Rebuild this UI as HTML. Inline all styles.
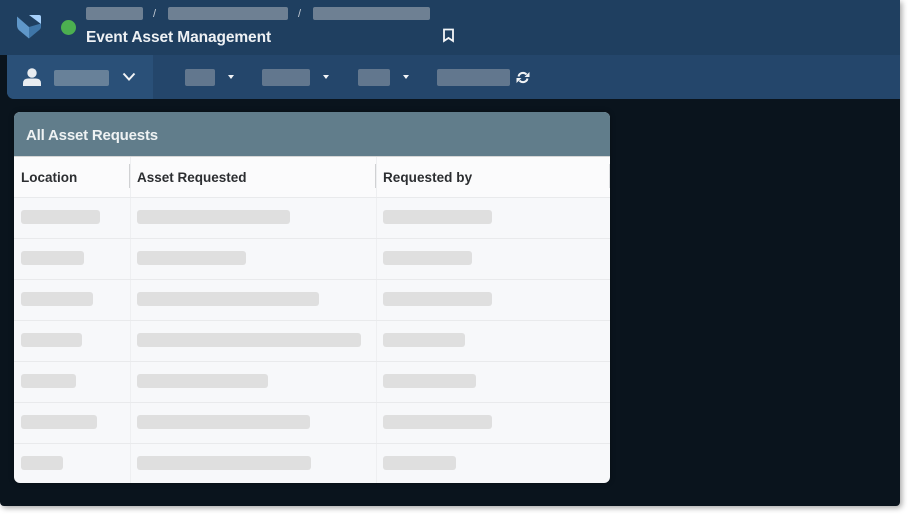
<!DOCTYPE html>
<html><head><meta charset="utf-8">
<style>
*{box-sizing:border-box;margin:0;padding:0}
html,body{width:908px;height:514px;background:#fff;overflow:hidden;font-family:"Liberation Sans",sans-serif}
.a{position:absolute}
#win{position:absolute;left:0;top:0;width:900px;height:506px;background:#0a141d;border-radius:0 0 4px 4px;box-shadow:2px 2px 6px rgba(0,0,0,.35);overflow:hidden}
.bc{position:absolute;top:7px;height:13px;background:#6e8093;border-radius:2px}
.nv{position:absolute;top:69px;height:17px;background:#62778e;border-radius:2px}
.car{position:absolute;top:75px;width:0;height:0;border-left:3.5px solid transparent;border-right:3.5px solid transparent;border-top:4.5px solid #f2f4f6}
.p{position:absolute;height:14px;background:#dfdfdf;border-radius:3px}
.h{position:absolute;top:169px;font-size:13.5px;font-weight:bold;color:#2c2e31;line-height:18px;white-space:nowrap}
.l{position:absolute;left:14px;width:596px;height:1px;background:#e9eaec}
</style></head><body>
<div id="win">
<div class="a" style="left:0;top:0;width:900px;height:55px;background:#1f3f60"></div>
<div class="a" style="left:0;top:55px;width:900px;height:44px;background:#0a141d"></div>
<div class="a" style="left:7px;top:55px;width:893px;height:44px;background:#24466b;border-radius:0 0 0 7px;overflow:hidden">
<div class="a" style="left:0;top:0;width:146px;height:44px;background:#2a5078"></div>
</div>
<svg class="a" style="left:0;top:0" width="60" height="50" viewBox="0 0 60 50">
<path d="M17 16.5 L29 27 L29 38.5 L20 31 Q17 29 17 25 Z" fill="#5f97c9"/>
<path d="M29 27 L41 23.5 L41 27 Q41 29 38 31 L29 38.5 Z" fill="#3f76a8"/>
<path d="M29 15 L39 15 Q41 15 41 17 L41 24 Z" fill="#a5d0fb"/>
</svg>
<div class="a" style="left:60.5px;top:20px;width:15px;height:15px;border-radius:50%;background:#4caf50"></div>
<div class="bc" style="left:86px;width:57px"></div>
<div class="bc" style="left:168px;width:120px"></div>
<div class="bc" style="left:313px;width:117px"></div>
<div class="a" style="left:153px;top:7px;font-size:11px;line-height:14px;color:#c4ccd5">/</div>
<div class="a" style="left:298px;top:7px;font-size:11px;line-height:14px;color:#c4ccd5">/</div>
<div class="a" style="left:86px;top:28px;font-size:15.5px;line-height:19px;font-weight:bold;color:#eef1f4;white-space:nowrap;letter-spacing:-.1px">Event Asset Management</div>
<svg class="a" style="left:442px;top:28px" width="13" height="15" viewBox="0 0 13 15"><path d="M2 1.5 H11 V13 L6.5 10 L2 13 Z" fill="none" stroke="#f4f6f8" stroke-width="1.8"/></svg>
<svg class="a" style="left:22px;top:67px" width="20" height="20" viewBox="0 0 20 20"><circle cx="10" cy="6" r="4.7" fill="#e8ecf0"/><path d="M1 19 V16.5 Q1 11.5 6 11.5 H14 Q19 11.5 19 16.5 V19 Z" fill="#e8ecf0"/></svg>
<div class="nv" style="left:54px;top:70px;height:16px;width:55px;background:#688199"></div>
<svg class="a" style="left:122px;top:72px" width="14" height="10" viewBox="0 0 14 10"><path d="M1.5 1.5 L7 7.5 L12.5 1.5" fill="none" stroke="#f2f4f6" stroke-width="2"/></svg>
<div class="nv" style="left:185px;width:30px"></div>
<div class="car" style="left:227.5px"></div>
<div class="nv" style="left:262px;width:48px"></div>
<div class="car" style="left:322.5px"></div>
<div class="nv" style="left:358px;width:32px"></div>
<div class="car" style="left:402.5px"></div>
<div class="nv" style="left:437px;width:73px"></div>
<svg class="a" style="left:516px;top:71px" width="14" height="13" viewBox="0 0 14 13"><path d="M2.5 5.5 A4.6 4.6 0 0 1 10.5 3.5" fill="none" stroke="#f2f4f6" stroke-width="2"/><path d="M11.5 7.5 A4.6 4.6 0 0 1 3.5 9.5" fill="none" stroke="#f2f4f6" stroke-width="2"/><path d="M13.5 1 V6 H8.5 Z" fill="#f2f4f6"/><path d="M.5 12 V7 H5.5 Z" fill="#f2f4f6"/></svg>

<div class="a" style="left:14px;top:112px;width:596px;height:371px;background:#f7f8fa;border-radius:6px;overflow:hidden;box-shadow:0 0 6px rgba(0,0,0,.3)">
<div class="a" style="left:0;top:0;width:596px;height:44px;background:#617d8b"></div>
<div class="a" style="left:0;top:44px;width:596px;height:1px;background:#d5d6d6"></div>
<div class="a" style="left:0;top:45px;width:596px;height:40px;background:#fbfbfc"></div>
<div class="a" style="left:12px;top:15px;font-size:15px;line-height:18px;font-weight:bold;color:#eef2f3;white-space:nowrap;letter-spacing:-.19px">All Asset Requests</div>
</div>
<div class="a" style="left:130px;top:157px;width:1px;height:326px;background:#eeeff1"></div>
<div class="a" style="left:376px;top:157px;width:1px;height:326px;background:#eeeff1"></div>
<div class="a" style="left:129px;top:164px;width:1px;height:24px;background:#d0d1d3"></div>
<div class="a" style="left:375px;top:164px;width:1px;height:24px;background:#d0d1d3"></div>
<div class="a" style="left:609px;top:164px;width:1px;height:24px;background:#dcdde0"></div>
<div class="l" style="top:197px"></div><div class="l" style="top:238px"></div><div class="l" style="top:279px"></div><div class="l" style="top:320px"></div><div class="l" style="top:361px"></div><div class="l" style="top:402px"></div><div class="l" style="top:443px"></div>
<div class="h" style="left:21px">Location</div>
<div class="h" style="left:137px">Asset Requested</div>
<div class="h" style="left:383px;letter-spacing:.05px">Requested by</div>

<div class="p" style="left:21px;top:210px;width:79px"></div><div class="p" style="left:137px;top:210px;width:153px"></div><div class="p" style="left:383px;top:210px;width:109px"></div>
<div class="p" style="left:21px;top:251px;width:63px"></div><div class="p" style="left:137px;top:251px;width:109px"></div><div class="p" style="left:383px;top:251px;width:89px"></div>
<div class="p" style="left:21px;top:292px;width:72px"></div><div class="p" style="left:137px;top:292px;width:182px"></div><div class="p" style="left:383px;top:292px;width:109px"></div>
<div class="p" style="left:21px;top:333px;width:61px"></div><div class="p" style="left:137px;top:333px;width:224px"></div><div class="p" style="left:383px;top:333px;width:82px"></div>
<div class="p" style="left:21px;top:374px;width:55px"></div><div class="p" style="left:137px;top:374px;width:131px"></div><div class="p" style="left:383px;top:374px;width:93px"></div>
<div class="p" style="left:21px;top:415px;width:76px"></div><div class="p" style="left:137px;top:415px;width:173px"></div><div class="p" style="left:383px;top:415px;width:109px"></div>
<div class="p" style="left:21px;top:456px;width:42px"></div><div class="p" style="left:137px;top:456px;width:174px"></div><div class="p" style="left:383px;top:456px;width:73px"></div>
</div>
</body></html>
